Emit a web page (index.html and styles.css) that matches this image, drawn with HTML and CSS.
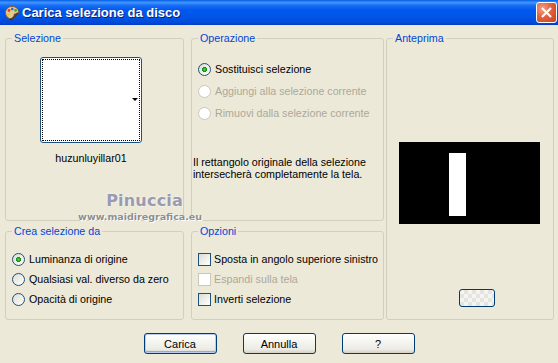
FILE: index.html
```html
<!DOCTYPE html>
<html lang="it">
<head>
    <meta charset="UTF-8">
    <meta name="viewport" content="width=device-width, initial-scale=1.0">
    <title>Carica selezione da disco</title>
    <link rel="stylesheet" href="styles.css">
</head>
<body>
    <div class="window">
        <div class="titlebar">
            <svg class="app-icon" width="16" height="16" viewBox="0 0 16 16">
                <path d="M8 1.5c3.8 0 6.5 2.3 6.5 5.2 0 2-1.6 2.4-3 2.2-1.2-.2-1.8.6-1.3 1.7.6 1.4-.2 3.2-2.6 3.2C4 13.8 1.5 11 1.5 7.6 1.5 4.2 4.4 1.5 8 1.5z" fill="#e8c98c" stroke="#8a5a22" stroke-width="1"/>
                <circle cx="5" cy="5.5" r="1.4" fill="#e23a2a"/>
                <circle cx="8.3" cy="4" r="1.3" fill="#2a5fe0"/>
                <circle cx="11.6" cy="5.4" r="1.3" fill="#2fa83a"/>
                <circle cx="4.6" cy="9.2" r="1.3" fill="#f2c31a"/>
                <path d="M13.5 8.5L7.5 14.5" stroke="#5a3b1a" stroke-width="2" stroke-linecap="round"/>
                <path d="M7.8 14.2l-1.6 1.3 .4-1.9z" fill="#222"/>
            </svg>
            <span class="title">Carica selezione da disco</span>
            <span class="close-btn">
                <svg width="20" height="20" viewBox="0 0 20 20">
                    <path d="M6 6L14 14M14 6L6 14" stroke="#fff" stroke-width="2.2" stroke-linecap="square"/>
                </svg>
            </span>
        </div>

        <div class="content">
            <div class="panels">
                <fieldset class="group group-selection">
                    <legend>Selezione</legend>
                    <div class="swatch-wrap">
                        <div class="swatch">
                            <span class="swatch-arrow"></span>
                        </div>
                        <div class="swatch-name">huzunluyillar01</div>
                    </div>
                </fieldset>

                <fieldset class="group group-operation">
                    <legend>Operazione</legend>
                    <div class="option-list wide">
                        <div class="option"><span class="radio checked"></span>Sostituisci selezione</div>
                        <div class="option disabled"><span class="radio"></span>Aggiungi alla selezione corrente</div>
                        <div class="option disabled"><span class="radio"></span>Rimuovi dalla selezione corrente</div>
                    </div>
                    <p class="note">Il rettangolo originale della selezione intersecherà completamente la tela.</p>
                </fieldset>

                <fieldset class="group group-preview">
                    <legend>Anteprima</legend>
                    <div class="preview">
                        <div class="preview-bar"></div>
                    </div>
                    <span class="preview-btn"></span>
                </fieldset>

                <fieldset class="group group-source">
                    <legend>Crea selezione da</legend>
                    <div class="option-list">
                        <div class="option"><span class="radio checked"></span>Luminanza di origine</div>
                        <div class="option"><span class="radio"></span>Qualsiasi val. diverso da zero</div>
                        <div class="option"><span class="radio"></span>Opacità di origine</div>
                    </div>
                </fieldset>

                <fieldset class="group group-options">
                    <legend>Opzioni</legend>
                    <div class="option-list">
                        <div class="option"><span class="check"></span>Sposta in angolo superiore sinistro</div>
                        <div class="option disabled"><span class="check"></span>Espandi sulla tela</div>
                        <div class="option"><span class="check"></span>Inverti selezione</div>
                    </div>
                </fieldset>
            </div>

            <div class="actions">
                <button class="btn default">Carica</button>
                <button class="btn">Annulla</button>
                <button class="btn">?</button>
            </div>

            <div class="watermark">
                <span class="wm-name">Pinuccia</span>
                <span class="wm-url">www.maidiregrafica.eu</span>
            </div>
        </div>
    </div>
</body>
</html>
```

FILE: styles.css
```css
body {
    margin: 0;
    padding: 0;
    background-color: #ece9d8;
    font-family: 'Liberation Sans', Arial, sans-serif;
    font-size: 10.7px;
    color: #000000;
}

.window {
    width: 558px;
    height: 363px;
    background-color: #ece9d8;
    overflow: hidden;
}

/* title bar */

.titlebar {
    height: 25px;
    display: flex;
    align-items: center;
    padding-left: 4px;
    background: linear-gradient(#0a5ee6 0%, #3d95ff 10%, #1a6df5 22%, #0058ee 40%, #0055e5 70%, #0048d8 92%, #003cc4 100%);
    box-sizing: border-box;
}

.app-icon {
    flex: none;
}

.title {
    margin-left: 2px;
    color: #ffffff;
    font-weight: bold;
    font-size: 13px;
    text-shadow: 1px 1px 0 #0a1f7a;
}

.close-btn {
    margin-left: auto;
    margin-right: 1px;
    width: 19px;
    height: 19px;
    border: 1px solid #ffffff;
    border-radius: 3px;
    background: radial-gradient(circle at 30% 30%, #f0a28a 0%, #e2623e 45%, #c8401e 100%);
    display: flex;
    align-items: center;
    justify-content: center;
}

.close-btn svg {
    width: 19px;
    height: 19px;
}

/* body */

.content {
    position: relative;
    padding: 7px 0 0 5px;
}

.panels {
    display: grid;
    grid-template-columns: 179px 7px 193px 2px 168px;
    grid-template-rows: 189px 95px;
    row-gap: 4px;
}

.group {
    margin: 0;
    padding: 0;
    min-width: 0;
    border: 1px solid #d0d0bf;
    border-radius: 3px;
}

.group legend {
    margin-left: 6px;
    padding: 0 2px;
    line-height: 13px;
    color: #0046d5;
}

.group-selection { grid-column: 1; grid-row: 1; }
.group-operation { grid-column: 3; grid-row: 1; }
.group-preview { grid-column: 5; grid-row: 1 / span 2; }
.group-source { grid-column: 1; grid-row: 2; }
.group-options { grid-column: 3; grid-row: 2; }

/* Selezione */

.swatch-wrap {
    width: 102px;
    margin: 12px 0 0 34px;
    text-align: center;
}

.swatch {
    position: relative;
    height: 86px;
    box-sizing: border-box;
    border: 1px solid #1c5180;
    border-radius: 3px;
    background-color: #ffffff;
    outline: 1px dotted #000000;
    outline-offset: -3px;
}

.swatch-arrow {
    position: absolute;
    right: 3px;
    top: 40px;
    width: 0;
    height: 0;
    border-left: 3px solid transparent;
    border-right: 3px solid transparent;
    border-top: 3px solid #000000;
}

.swatch-name {
    margin-top: 9px;
    line-height: 13px;
}

/* option rows */

.option-list {
    padding: 11px 0 0 6px;
}

.option-list.wide {
    padding-top: 13px;
}

.option {
    height: 20px;
    display: flex;
    align-items: center;
    white-space: nowrap;
}

.option-list.wide .option {
    height: 22px;
}

.option.disabled {
    color: #aca899;
}

.radio,
.check {
    flex: none;
    width: 13px;
    height: 13px;
    box-sizing: border-box;
    margin-right: 4px;
    border: 1px solid #1c5180;
    background: linear-gradient(135deg, #dcdcd7 0%, #f0f0ea 55%, #ffffff 100%);
}

.radio {
    border-radius: 50%;
}

.radio.checked {
    background:
        radial-gradient(circle, #5be25b 0%, #21a121 1.6px, #1a8a1a 2.4px, transparent 2.8px),
        linear-gradient(135deg, #dcdcd7 0%, #f0f0ea 55%, #ffffff 100%);
}

.disabled .radio,
.disabled .check {
    border-color: #cac8bb;
    background: #ffffff;
}

.check {
    margin-right: 3px;
}

.note {
    margin: 32px 0 0 1px;
    line-height: 12px;
}

/* Anteprima */

.preview {
    width: 141px;
    height: 82px;
    margin: 97px 0 0 12px;
    background-color: #000000;
    padding: 11px 0 0 50px;
    box-sizing: border-box;
}

.preview-bar {
    width: 17px;
    height: 63px;
    background-color: #ffffff;
}

.preview-btn {
    display: block;
    width: 36px;
    height: 18px;
    box-sizing: border-box;
    margin: 65px 0 0 72px;
    border: 1px solid #003c74;
    border-radius: 3px;
    background-color: #f4f4f0;
    background-image:
        linear-gradient(45deg, #e4e4e0 25%, transparent 25%, transparent 75%, #e4e4e0 75%),
        linear-gradient(45deg, #e4e4e0 25%, transparent 25%, transparent 75%, #e4e4e0 75%);
    background-size: 8px 8px;
    background-position: 0 0, 4px 4px;
}

/* buttons */

.actions {
    display: flex;
    justify-content: center;
    gap: 26px;
    margin: 13px 0 0 -5px;
}

.btn {
    width: 73px;
    height: 21px;
    padding: 0;
    border: 1px solid #003c74;
    border-radius: 3px;
    background: linear-gradient(#ffffff 0%, #f5f5f1 40%, #ecebe5 80%, #d6d0c5 100%);
    font-family: 'Liberation Sans', Arial, sans-serif;
    font-size: 11px;
    color: #000000;
}

.btn.default {
    box-shadow: inset 0 0 0 1px #b8ccf4, inset 0 -1px 0 1px #89ade4;
}

/* watermark over the panels */

.watermark {
    position: absolute;
    left: 78px;
    top: 166px;
    display: flex;
    flex-direction: column;
    align-items: flex-end;
    width: 124px;
    pointer-events: none;
}

.wm-name {
    margin-right: 19px;
    font-family: 'DejaVu Sans', sans-serif;
    font-weight: bold;
    font-size: 16px;
    line-height: 20px;
    letter-spacing: 0.2px;
    color: #9a9ab0;
    text-shadow: 0 0 2px #ffffff;
}

.wm-url {
    font-family: 'DejaVu Sans', sans-serif;
    font-weight: bold;
    font-size: 9.5px;
    line-height: 11px;
    color: #8e8e8e;
    text-shadow: 0 0 1px #ffffff, 1px 1px 0 #ffffff;
    white-space: nowrap;
}
```
